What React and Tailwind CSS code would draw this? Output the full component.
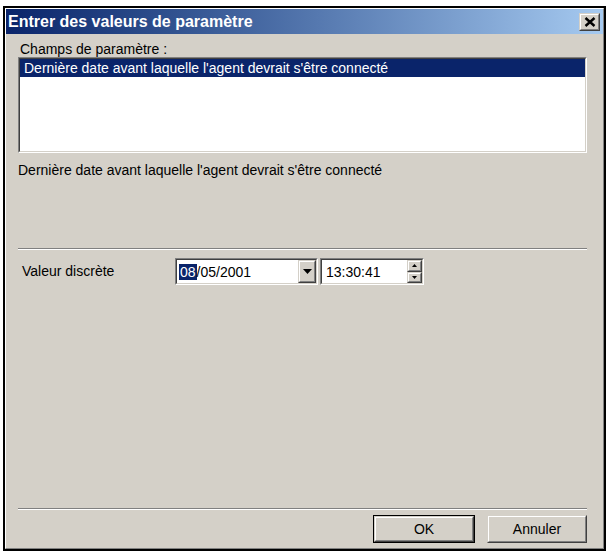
import React from 'react'

// Win2000-style "Entrer des valeurs de paramètre" dialog

function Sunken({ className = '', children }) {
  return (
    <div className={`border border-t-[#808080] border-l-[#808080] border-b-white border-r-white ${className}`}>
      <div className="h-full border border-t-[#404040] border-l-[#404040] border-b-[#d4d0c8] border-r-[#d4d0c8] bg-white">
        {children}
      </div>
    </div>
  )
}

function Raised({ className = '', children }) {
  return (
    <div className={`border border-t-[#d4d0c8] border-l-[#d4d0c8] border-b-[#404040] border-r-[#404040] bg-[#d4d0c8] ${className}`}>
      <div className="flex h-full items-center justify-center border border-t-white border-l-white border-b-[#808080] border-r-[#808080]">
        {children}
      </div>
    </div>
  )
}

function Separator() {
  return <div className="h-[2px] border-t border-t-[#808080] border-b border-b-white" />
}

export default function App() {
  return (
    <div
      className="w-[609px] h-[554px] bg-white pt-[6px] pl-[3px] text-[14px] text-black"
      style={{ fontFamily: '"Liberation Sans", Arial, sans-serif' }}
    >
      <div className="w-[603px] h-[545px] border-2 border-black">
        <div className="flex h-full flex-col border border-t-white border-l-white border-b-[#808080] border-r-[#808080] bg-[#d4d0c8]">
          {/* Title bar */}
          <div className="flex h-[25px] shrink-0 items-center justify-between bg-gradient-to-r from-[#0a246a] to-[#a6caf0] pl-[2px] pr-[3px]">
            <span className="text-[16px] font-bold leading-none text-white">Entrer des valeurs de paramètre</span>
            <Raised className="w-[21px] h-[18px]">
              <svg width="12" height="10" viewBox="0 0 12 10">
                <path d="M1.5 1 L10.5 9 M10.5 1 L1.5 9" stroke="#000" strokeWidth="2.4" />
              </svg>
            </Raised>
          </div>

          {/* Body */}
          <div className="flex flex-1 flex-col pl-[12px] pr-[16px] pb-[5px]">
            <div className="mt-[8px] h-[15px] pl-[2px] leading-[15px]">Champs de paramètre :</div>

            <Sunken className="h-[96px]">
              <div className="h-[18px] bg-[#0a246a] pl-[4px] leading-[18px] text-white">
                Dernière date avant laquelle l'agent devrait s'être connecté
              </div>
            </Sunken>

            <div className="mt-[9px] leading-[16px]">Dernière date avant laquelle l'agent devrait s'être connecté</div>

            <div className="mt-[70px]">
              <Separator />
            </div>

            <div className="mt-[8px] flex h-[27px] items-center">
              <div className="w-[157px] pl-[4px]">Valeur discrète</div>
              <Sunken className="w-[143px] h-[27px]">
                <div className="flex h-full items-center">
                  <div className="flex-1 pl-[2px] leading-none">
                    <span className="bg-[#0a246a] px-[1px] text-white">08</span>/05/2001
                  </div>
                  <Raised className="w-[18px] h-full">
                    <svg width="9" height="5" viewBox="0 0 9 5">
                      <path d="M0 0 H9 L4.5 5 Z" fill="#000" />
                    </svg>
                  </Raised>
                </div>
              </Sunken>
              <Sunken className="ml-[2px] w-[104px] h-[27px]">
                <div className="flex h-full items-center">
                  <div className="flex-1 pl-[4px] leading-none">13:30:41</div>
                  <div className="flex h-full w-[15px] flex-col">
                    <Raised className="flex-1">
                      <svg width="5" height="3" viewBox="0 0 5 3">
                        <path d="M0 3 H5 L2.5 0 Z" fill="#000" />
                      </svg>
                    </Raised>
                    <Raised className="flex-1">
                      <svg width="5" height="3" viewBox="0 0 5 3">
                        <path d="M0 0 H5 L2.5 3 Z" fill="#000" />
                      </svg>
                    </Raised>
                  </div>
                </div>
              </Sunken>
            </div>

            <div className="mt-auto">
              <Separator />
            </div>

            <div className="mt-[5px] flex justify-end gap-[12px]">
              <div className="border border-black">
                <Raised className="w-[100px] h-[26px]">
                  <span>OK</span>
                </Raised>
              </div>
              <Raised className="w-[100px] h-[28px]">
                <span>Annuler</span>
              </Raised>
            </div>
          </div>
        </div>
      </div>
    </div>
  )
}
